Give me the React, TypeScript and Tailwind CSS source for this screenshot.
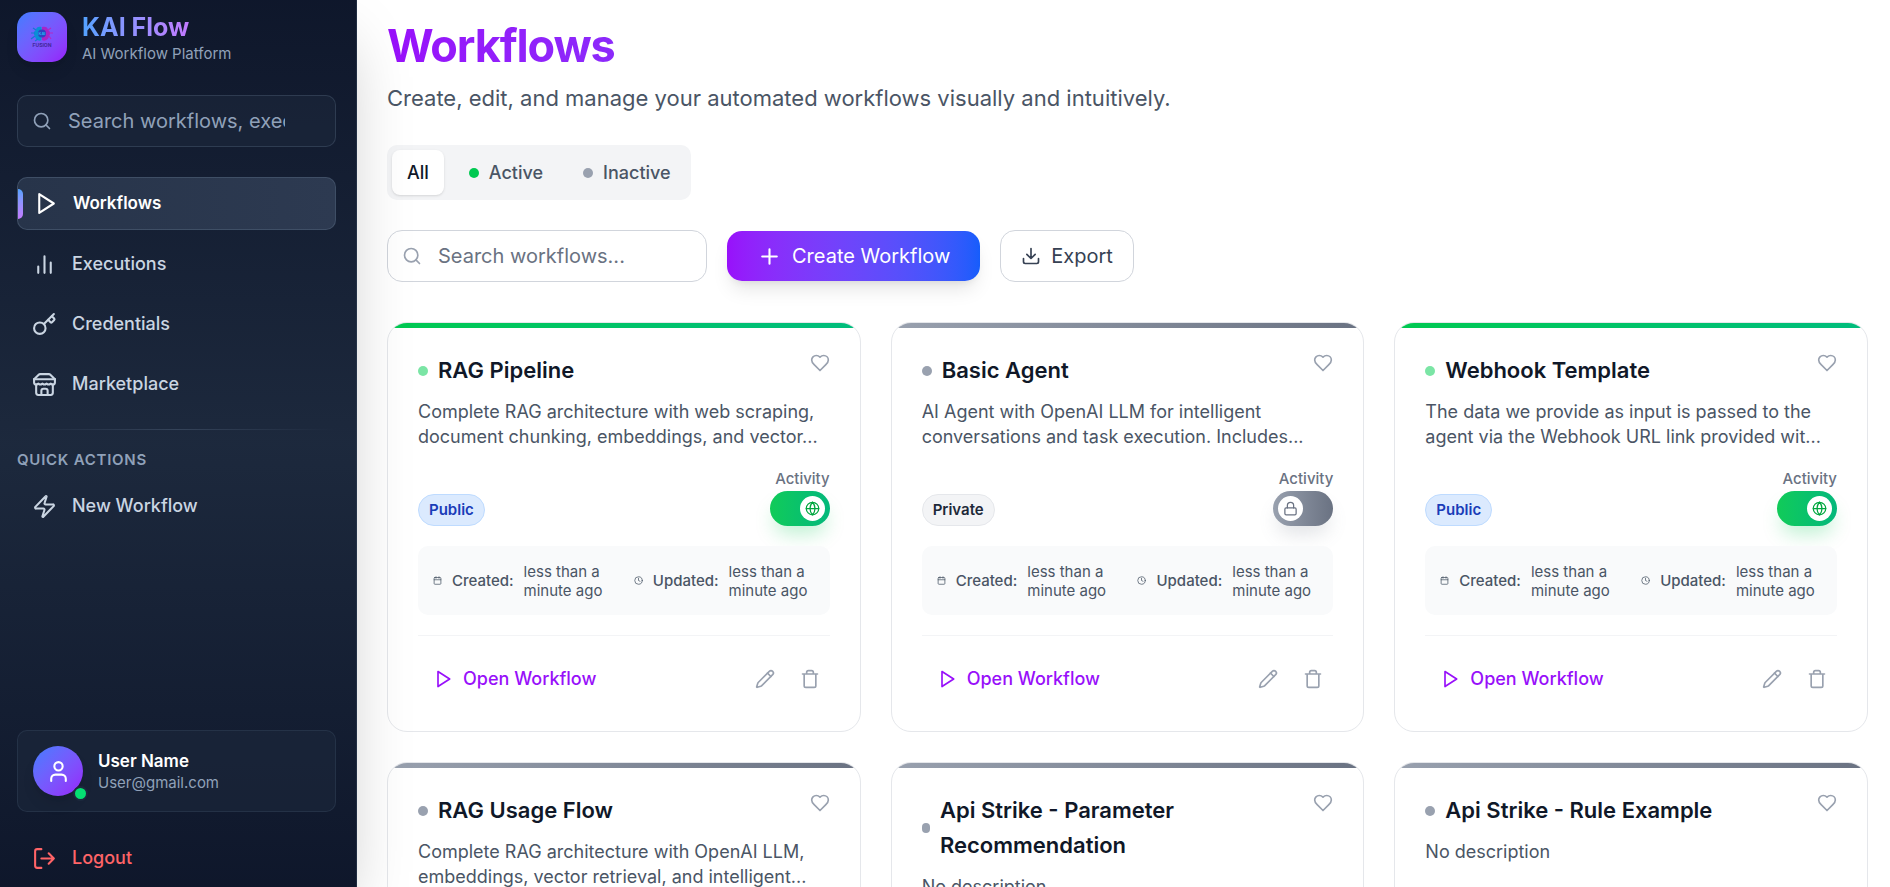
import { useState } from "react";
import type { ReactNode } from "react";

type IconProps = { className?: string; children?: ReactNode };

function Icon({ className = "size-5", children }: IconProps) {
  return (
    <svg
      viewBox="0 0 24 24"
      fill="none"
      stroke="currentColor"
      strokeWidth={2}
      strokeLinecap="round"
      strokeLinejoin="round"
      aria-hidden="true"
      className={className}
    >
      {children}
    </svg>
  );
}

const SearchIcon = ({ className }: IconProps) => (
  <Icon className={className}>
    <circle cx="11" cy="11" r="8" />
    <path d="m21 21-4.3-4.3" />
  </Icon>
);
const PlayIcon = ({ className }: IconProps) => (
  <Icon className={className}>
    <polygon points="6 3 20 12 6 21 6 3" />
  </Icon>
);
const BarsIcon = ({ className }: IconProps) => (
  <Icon className={className}>
    <path d="M18 20V10M12 20V4M6 20v-6" />
  </Icon>
);
const KeyIcon = ({ className }: IconProps) => (
  <Icon className={className}>
    <path d="m15.5 7.5 2.3 2.3a1 1 0 0 0 1.4 0l2.1-2.1a1 1 0 0 0 0-1.4L19 4" />
    <path d="m21 2-9.6 9.6" />
    <circle cx="7.5" cy="15.5" r="5.5" />
  </Icon>
);
const StoreIcon = ({ className }: IconProps) => (
  <Icon className={className}>
    <path d="m2 7 4.41-4.41A2 2 0 0 1 7.83 2h8.34a2 2 0 0 1 1.42.59L22 7" />
    <path d="M4 12v8a2 2 0 0 0 2 2h12a2 2 0 0 0 2-2v-8" />
    <path d="M15 22v-4a2 2 0 0 0-2-2h-2a2 2 0 0 0-2 2v4" />
    <path d="M2 7h20" />
    <path d="M22 7v3a2 2 0 0 1-2 2a2.7 2.7 0 0 1-1.59-.63.7.7 0 0 0-.82 0A2.7 2.7 0 0 1 16 12a2.7 2.7 0 0 1-1.59-.63.7.7 0 0 0-.82 0A2.7 2.7 0 0 1 12 12a2.7 2.7 0 0 1-1.59-.63.7.7 0 0 0-.82 0A2.7 2.7 0 0 1 8 12a2.7 2.7 0 0 1-1.59-.63.7.7 0 0 0-.82 0A2.7 2.7 0 0 1 4 12a2 2 0 0 1-2-2V7" />
  </Icon>
);
const ZapIcon = ({ className }: IconProps) => (
  <Icon className={className}>
    <path d="M4 14a1 1 0 0 1-.78-1.63l9.9-10.2a.5.5 0 0 1 .86.46l-1.92 6.02A1 1 0 0 0 13 10h7a1 1 0 0 1 .78 1.63l-9.9 10.2a.5.5 0 0 1-.86-.46l1.92-6.02A1 1 0 0 0 11 14z" />
  </Icon>
);
const UserIcon = ({ className }: IconProps) => (
  <Icon className={className}>
    <path d="M19 21v-2a4 4 0 0 0-4-4H9a4 4 0 0 0-4 4v2" />
    <circle cx="12" cy="7" r="4" />
  </Icon>
);
const LogoutIcon = ({ className }: IconProps) => (
  <Icon className={className}>
    <path d="M9 21H5a2 2 0 0 1-2-2V5a2 2 0 0 1 2-2h4M16 17l5-5-5-5M21 12H9" />
  </Icon>
);
const PlusIcon = ({ className }: IconProps) => (
  <Icon className={className}>
    <path d="M5 12h14M12 5v14" />
  </Icon>
);
const DownloadIcon = ({ className }: IconProps) => (
  <Icon className={className}>
    <path d="M21 15v4a2 2 0 0 1-2 2H5a2 2 0 0 1-2-2v-4M7 10l5 5 5-5M12 15V3" />
  </Icon>
);
const HeartIcon = ({ className }: IconProps) => (
  <Icon className={className}>
    <path d="M19 14c1.49-1.46 3-3.21 3-5.5A5.5 5.5 0 0 0 16.5 3c-1.76 0-3 .5-4.5 2-1.5-1.5-2.74-2-4.5-2A5.5 5.5 0 0 0 2 8.5c0 2.3 1.5 4.05 3 5.5l7 7Z" />
  </Icon>
);
const GlobeIcon = ({ className }: IconProps) => (
  <Icon className={className}>
    <circle cx="12" cy="12" r="10" />
    <path d="M12 2a14.5 14.5 0 0 0 0 20 14.5 14.5 0 0 0 0-20M2 12h20" />
  </Icon>
);
const LockIcon = ({ className }: IconProps) => (
  <Icon className={className}>
    <rect width="18" height="11" x="3" y="11" rx="2" />
    <path d="M7 11V7a5 5 0 0 1 10 0v4" />
  </Icon>
);
const CalendarIcon = ({ className }: IconProps) => (
  <Icon className={className}>
    <path d="M8 2v4M16 2v4M3 10h18" />
    <rect width="18" height="18" x="3" y="4" rx="2" />
  </Icon>
);
const ClockIcon = ({ className }: IconProps) => (
  <Icon className={className}>
    <circle cx="12" cy="12" r="10" />
    <path d="M12 6v6l4 2" />
  </Icon>
);
const PencilIcon = ({ className }: IconProps) => (
  <Icon className={className}>
    <path d="M21.174 6.812a1 1 0 0 0-3.986-3.987L3.842 16.174a2 2 0 0 0-.5.83l-1.321 4.352a.5.5 0 0 0 .623.622l4.353-1.32a2 2 0 0 0 .83-.497z" />
    <path d="m15 5 4 4" />
  </Icon>
);
const TrashIcon = ({ className }: IconProps) => (
  <Icon className={className}>
    <path d="M3 6h18M19 6v14c0 1-1 2-2 2H7c-1 0-2-1-2-2V6M8 6V4c0-1 1-2 2-2h4c1 0 2 1 2 2v2" />
  </Icon>
);

function Logo() {
  return (
    <div className="flex size-[50px] shrink-0 items-center justify-center rounded-[15px] bg-linear-to-br from-[#3b7dff] to-[#9619fa] shadow-lg">
      <svg viewBox="0 0 24 24" className="size-6" role="img" aria-label="KAI Fusion">
        <path d="M11.500 2C9 1 6 2 6 5c-2 1-3 4-1 6 0 3 4 6 6.500 4Z" fill="#0a8fd6" />
        <path d="M12 2c3-1 6 0 6 3 2 1 3 4 1 6 0 3-4 6-7 4Z" fill="#a824c8" />
        <path d="M6 5 3 3M5 8H1M5 11l-4 3M8 14l-3 2" stroke="#1478d2" strokeWidth="1.200" fill="none" />
        <path d="m18 5 3-2M19 8h4M19 11l2 3" stroke="#b428c4" strokeWidth="1.200" fill="none" />
        <circle cx="12" cy="8.500" r="4" fill="#2d43c4" />
        <text x="12" y="10" textAnchor="middle" fontSize="4" fontWeight="700" fill="#22b8ee">KAI</text>
        <text x="12" y="22" textAnchor="middle" fontSize="5" fontWeight="700" fill="#43279a">FUSION</text>
      </svg>
    </div>
  );
}

const navItems = [
  { label: "Workflows", icon: PlayIcon, active: true },
  { label: "Executions", icon: BarsIcon, active: false },
  { label: "Credentials", icon: KeyIcon, active: false },
  { label: "Marketplace", icon: StoreIcon, active: false },
];

function Sidebar() {
  return (
    <aside className="relative z-10 flex w-[357px] shrink-0 flex-col border-r border-slate-700/50 bg-linear-to-b from-slate-900 via-slate-800 to-slate-900 pt-3 pr-5 pb-[3px] pl-[17px] shadow-[0_31px_62px_-15px_rgba(0,0,0,0.25)]">
      <div className="flex items-start gap-[15px]">
        <Logo />
        <div>
          <div className="w-fit bg-linear-to-r from-[#51a2ff] to-[#c27aff] bg-clip-text text-[25px] leading-[30px] font-bold text-transparent">
            KAI Flow
          </div>
          <div className="mt-[2px] text-[15px] leading-5 text-slate-400">AI Workflow Platform</div>
        </div>
      </div>

      <label className="mt-[31px] flex h-[52px] items-center gap-4 rounded-[10px] border border-slate-600/50 bg-slate-800/50 pr-[50px] pl-[14px]">
        <SearchIcon className="size-5 shrink-0 text-slate-400" />
        <input
          type="text"
          aria-label="Search workflows, executions"
          placeholder="Search workflows, executions..."
          className="w-full min-w-0 bg-transparent text-xl text-white outline-none placeholder:text-slate-400"
        />
      </label>

      <nav className="mt-[30px] flex flex-col gap-2">
        {navItems.map(({ label, icon: NavIcon, active }) => (
          <a
            key={label}
            href="#"
            className={
              active
                ? "relative flex h-[53px] items-center gap-[15px] rounded-[10px] border border-slate-600/80 bg-linear-to-r from-[#27344a] to-[#2d3a51] px-[15px] text-[17px] font-semibold text-white"
                : "flex h-[52px] items-center gap-[15px] rounded-[10px] px-[15px] text-lg font-medium text-slate-300"
            }
          >
            {active && (
              <span className="absolute left-0 h-[30px] w-[5px] rounded-r-md bg-linear-to-b from-[#51a2ff] to-[#c27aff]" />
            )}
            <NavIcon className="size-[25px]" />
            {label}
          </a>
        ))}
      </nav>

      <div className="mt-[19px] h-px bg-linear-to-r from-transparent via-slate-600/60 to-transparent" />

      <h2 className="mt-5 text-[15px] leading-5 font-semibold tracking-wider text-slate-400 uppercase">
        Quick Actions
      </h2>
      <a
        href="#"
        className="mt-[10px] flex h-[52px] items-center gap-[15px] rounded-[10px] px-[15px] text-lg font-medium text-slate-300"
      >
        <ZapIcon className="size-[25px]" />
        New Workflow
      </a>

      <div className="mt-auto flex items-center gap-[15px] rounded-[10px] border border-slate-700/50 bg-slate-800/50 p-[15px]">
        <div className="relative flex size-[50px] shrink-0 items-center justify-center rounded-full bg-linear-to-br from-[#3b7dff] to-[#9619fa] text-white shadow-lg">
          <UserIcon className="size-[25px]" />
          <span className="absolute -right-[5px] -bottom-[5px] size-[15px] rounded-full border-2 border-slate-800 bg-[#05df72]" />
        </div>
        <div>
          <div className="text-[17px] leading-6 font-semibold text-white">User Name</div>
          <div className="text-[15px] leading-5 text-slate-400">User@gmail.com</div>
        </div>
      </div>
      <button
        type="button"
        className="mt-5 flex h-[52px] items-center gap-[15px] rounded-[10px] px-[15px] text-lg font-medium text-[#ff6467]"
      >
        <LogoutIcon className="size-[25px]" />
        Logout
      </button>
    </aside>
  );
}

type Workflow = { name: string; description: string; isPublic: boolean };

const workflows: Workflow[] = [
  {
    name: "RAG Pipeline",
    description: "Complete RAG architecture with web scraping, document chunking, embeddings, and vector...",
    isPublic: true,
  },
  {
    name: "Basic Agent",
    description: "AI Agent with OpenAI LLM for intelligent conversations and task execution. Includes...",
    isPublic: false,
  },
  {
    name: "Webhook Template",
    description: "The data we provide as input is passed to the agent via the Webhook URL link provided wit...",
    isPublic: true,
  },
  {
    name: "RAG Usage Flow",
    description: "Complete RAG architecture with OpenAI LLM, embeddings, vector retrieval, and intelligent...",
    isPublic: false,
  },
  { name: "Api Strike - Parameter Recommendation", description: "No description", isPublic: false },
  { name: "Api Strike - Rule Example", description: "No description", isPublic: false },
];

function DateInfo({ icon, label }: { icon: ReactNode; label: string }) {
  return (
    <div className="flex items-center gap-[10px]">
      {icon}
      <span className="font-medium">{label}</span>
      <span>less than a minute ago</span>
    </div>
  );
}

function WorkflowCard({ name, description, isPublic }: Workflow) {
  const [on, setOn] = useState(isPublic);
  return (
    <article className="flex flex-col overflow-hidden rounded-[20px] border border-gray-200 bg-white">
      <div
        className={
          on
            ? "h-[5px] shrink-0 bg-linear-to-r from-green-500 to-emerald-500"
            : "h-[5px] shrink-0 bg-linear-to-r from-gray-400 to-gray-500"
        }
      />
      <div className="flex flex-1 flex-col px-[30px] pt-[25px] pb-8">
        <div className="flex items-start justify-between">
          <div className="flex flex-1 items-center gap-[10px]">
            <span className={on ? "h-[10px] w-[10px] rounded-full bg-[#7be5a5]" : "h-[10px] w-[10px] rounded-full bg-gray-400"} />
            <h3 className="text-[22px] leading-[35px] font-semibold text-gray-900">{name}</h3>
          </div>
          <button type="button" aria-label="Add to favorites" className="ml-5 shrink-0 text-gray-400">
            <HeartIcon className="size-5" />
          </button>
        </div>
        <p className="mt-[11px] line-clamp-2 text-lg leading-[25px] text-gray-600">{description}</p>

        <div className="mt-auto flex items-end justify-between pt-5">
          <span
            className={
              isPublic
                ? "flex h-8 items-center rounded-full border border-blue-200 bg-blue-100 px-[10px] text-[15px] font-semibold text-blue-800"
                : "flex h-8 items-center rounded-full border border-gray-200 bg-gray-100 px-[10px] text-[15px] font-semibold text-gray-800"
            }
          >
            {isPublic ? "Public" : "Private"}
          </span>
          <div className="flex flex-col items-end gap-[2px]">
            <span className="text-[15px] leading-5 font-medium text-gray-500">Activity</span>
            <button
              type="button"
              role="switch"
              aria-checked={on}
              aria-label={`${name} activity`}
              onClick={() => setOn(!on)}
              className={
                on
                  ? "flex h-[35px] w-[60px] items-center justify-end rounded-full bg-linear-to-r from-[#11cb58] to-[#04b87b] p-[5px] shadow-[0_12px_19px_-4px_rgba(0,201,80,0.25)]"
                  : "flex h-[35px] w-[60px] items-center justify-start rounded-full bg-linear-to-r from-gray-400 to-gray-500 p-[5px] shadow-[0_12px_19px_-4px_rgba(106,114,130,0.2)]"
              }
            >
              <span className="flex size-[25px] items-center justify-center rounded-full bg-white">
                {on ? <GlobeIcon className="size-[15px] text-green-600" /> : <LockIcon className="size-[15px] text-gray-500" />}
              </span>
            </button>
          </div>
        </div>

        <div className="mt-5 grid min-h-[69px] grid-cols-2 items-center gap-5 rounded-[10px] bg-gray-50 px-[15px] text-[15px] leading-[19px] text-gray-600">
          <DateInfo icon={<CalendarIcon className="size-[9px] shrink-0" />} label="Created:" />
          <DateInfo icon={<ClockIcon className="size-[9px] shrink-0" />} label="Updated:" />
        </div>

        <div className="mt-5 flex items-center justify-between border-t border-gray-100 pt-[23px]">
          <button type="button" className="flex h-10 items-center gap-[10px] px-[15px] text-lg font-medium text-purple-600">
            <PlayIcon className="size-5" />
            Open Workflow
          </button>
          <div className="flex gap-[5px] text-gray-400">
            <button type="button" aria-label="Edit workflow" className="p-[10px]">
              <PencilIcon className="size-5" />
            </button>
            <button type="button" aria-label="Delete workflow" className="p-[10px]">
              <TrashIcon className="size-5" />
            </button>
          </div>
        </div>
      </div>
    </article>
  );
}

export default function App() {
  return (
    <div className="flex h-screen overflow-hidden bg-white font-['Inter',sans-serif]">
      <Sidebar />
      <main className="min-w-0 flex-1 overflow-y-auto pt-[21px] pr-[22px] pb-8 pl-[30px] [scrollbar-width:none]">
        <h1 className="bg-linear-to-r from-purple-600 to-blue-600 bg-clip-text text-[45px] leading-[50px] font-bold tracking-tight text-transparent">
          Workflows
        </h1>
        <p className="mt-[10px] text-[22px] leading-[35px] text-gray-600">
          Create, edit, and manage your automated workflows visually and intuitively.
        </p>

        <div className="mt-[29px] flex w-fit gap-[10px] rounded-[10px] bg-gray-100 p-[5px] text-lg font-medium text-gray-600">
          <button type="button" className="h-[45px] rounded-lg bg-white px-[15px] text-gray-900 shadow-sm">
            All
          </button>
          <button type="button" className="flex h-[45px] items-center gap-[10px] px-[15px]">
            <span className="size-[10px] rounded-full bg-green-500" />
            Active
          </button>
          <button type="button" className="flex h-[45px] items-center gap-[10px] px-[15px]">
            <span className="size-[10px] rounded-full bg-gray-400" />
            Inactive
          </button>
        </div>

        <div className="mt-[30px] flex items-center gap-5 text-xl">
          <label className="flex h-[52px] w-80 items-center gap-4 rounded-[15px] border border-gray-300 bg-white px-[14px]">
            <SearchIcon className="size-5 shrink-0 text-gray-400" />
            <input
              type="text"
              aria-label="Search workflows"
              placeholder="Search workflows..."
              className="w-full min-w-0 bg-transparent text-gray-900 outline-none placeholder:text-gray-500"
            />
          </label>
          <button
            type="button"
            className="flex h-[50px] items-center gap-[10px] rounded-[15px] bg-linear-to-r from-purple-600 to-blue-600 px-[30px] text-white shadow-[0_12px_19px_-4px_rgba(0,0,0,0.1),0_5px_8px_-5px_rgba(0,0,0,0.1)]"
          >
            <PlusIcon className="size-[25px]" />
            Create Workflow
          </button>
          <button
            type="button"
            className="flex h-[52px] items-center gap-[10px] rounded-[15px] border border-gray-300 bg-white px-5 text-gray-700"
          >
            <DownloadIcon className="size-5" />
            Export
          </button>
        </div>

        <div className="mt-10 grid grid-cols-3 gap-[30px]">
          {workflows.map((workflow) => (
            <WorkflowCard key={workflow.name} {...workflow} />
          ))}
        </div>
      </main>
    </div>
  );
}
